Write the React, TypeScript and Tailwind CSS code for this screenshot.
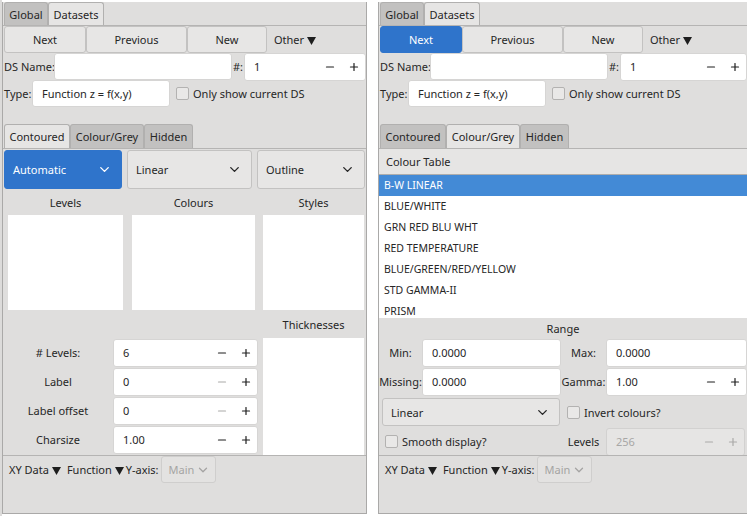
import { ChevronDown, Minus, Plus } from "lucide-react";
import clsx from "clsx";

type SpinProps = { value: string; dimMinus?: boolean; disabled?: boolean; className?: string };

function Spin({ value, dimMinus, disabled, className }: SpinProps) {
  return (
    <div
      className={clsx(
        "flex items-center h-[28px] rounded-[3px] border pl-[9px] pr-[5px]",
        disabled ? "bg-[#e6e5e4] border-[#d2d1d0] text-[#a8a7a6]" : "bg-white border-[#d6d5d4]",
        className
      )}
    >
      <span className="flex-1">{value}</span>
      <Minus size={12} strokeWidth={2.4} className={dimMinus || disabled ? "text-[#aaa9a8]" : "text-[#1e1e1e]"} />
      <Plus size={12} strokeWidth={2.4} className={clsx("ml-[12px]", disabled ? "text-[#aaa9a8]" : "text-[#1e1e1e]")} />
    </div>
  );
}

function Input({ value, className }: { value?: string; className?: string }) {
  return (
    <div className={clsx("h-[27px] flex items-center bg-white rounded-[3px] border border-[#d6d5d4] px-[9px]", className)}>
      {value}
    </div>
  );
}

function Check({ className }: { className?: string }) {
  return <div className={clsx("w-[13px] h-[13px] shrink-0 rounded-[2px] border border-[#b3b2b1] bg-[#e9e8e7]", className)} />;
}

// filled down-pointing triangle used by the menu buttons
function Tri() {
  return (
    <svg width="9" height="8" viewBox="0 0 9 8" className="inline-block ml-[3px] align-[-1px]">
      <polygon points="0,0 9,0 4.5,8" fill="#1e1e1e" />
    </svg>
  );
}

function Tab({ label, active, w }: { label: string; active?: boolean; w: string }) {
  return (
    <div
      className={clsx(
        "h-full flex items-center justify-center border border-b-0 border-[#b1b0af] rounded-t-[3px]",
        active ? "bg-[#e6e5e4]" : "bg-[#c2c1c0]",
        w
      )}
    >
      {label}
    </div>
  );
}

function Button({ label, primary, w }: { label: string; primary?: boolean; w: string }) {
  return (
    <div
      className={clsx(
        "h-full flex items-center justify-center rounded-[3px] border",
        primary ? "bg-[#2f74cb] border-[#2f74cb] text-white" : "bg-[#e7e6e5] border-[#c3c2c1]",
        w
      )}
    >
      {label}
    </div>
  );
}

function Combo({ label, primary, className }: { label: string; primary?: boolean; className?: string }) {
  return (
    <div
      className={clsx(
        "flex items-center rounded-[3px] border pl-[8px] pr-[9px]",
        primary ? "bg-[#2f74cb] border-[#2f74cb] text-white" : "bg-[#e7e6e5] border-[#c3c2c1]",
        className
      )}
    >
      <span className="flex-1">{label}</span>
      <ChevronDown size={15} strokeWidth={2.2} />
    </div>
  );
}

function Contoured() {
  return (
    <div className="flex flex-col flex-1">
      <div className="flex h-[40px] gap-[5px] pl-[1px] pr-[1px] pt-px">
        <Combo label="Automatic" primary className="w-[118px]" />
        <Combo label="Linear" className="w-[125px]" />
        <Combo label="Outline" className="flex-1" />
      </div>
      <div className="flex h-[26px] items-center">
        <div className="ml-[5px] w-[115px] text-center">Levels</div>
        <div className="ml-[9px] w-[123px] text-center">Colours</div>
        <div className="ml-[8px] w-[101px] text-center">Styles</div>
      </div>
      <div className="flex h-[95px]">
        <div className="ml-[5px] w-[115px] bg-white" />
        <div className="ml-[9px] w-[123px] bg-white" />
        <div className="ml-[8px] w-[101px] bg-white" />
      </div>
      <div className="flex h-[28px] items-center">
        <div className="ml-[260px] w-[101px] text-center">Thicknesses</div>
      </div>
      <div className="flex">
        <div className="flex flex-col w-[255px]">
          {[
            ["# Levels:", "6", false],
            ["Label", "0", true],
            ["Label offset", "0", true],
            ["Charsize", "1.00", false],
          ].map(([l, v, dim]) => (
            <div key={l as string} className="flex items-center h-[29px]">
              <div className="w-[110px] text-center">{l}</div>
              <Spin value={v as string} dimMinus={dim as boolean} className="w-[145px]" />
            </div>
          ))}
        </div>
        <div className="ml-[5px] w-[101px] h-[117px] bg-white" />
      </div>
    </div>
  );
}

const tables = [
  "B-W LINEAR",
  "BLUE/WHITE",
  "GRN RED BLU WHT",
  "RED TEMPERATURE",
  "BLUE/GREEN/RED/YELLOW",
  "STD GAMMA-II",
  "PRISM",
];

function ColourGrey() {
  return (
    <div className="flex flex-col flex-1">
      <div className="h-[26px] flex items-center pl-[7px] bg-[#e6e5e4] border-b border-[#aeadac]">Colour Table</div>
      <div className="h-[143px] overflow-hidden bg-white text-[10.5px]">
        {tables.map((t, i) => (
          <div
            key={t}
            className={clsx("h-[21px] flex items-center pl-[5px] shrink-0", i === 0 && "bg-[#438ad6] text-white")}
          >
            {t}
          </div>
        ))}
      </div>
      <div className="h-[20px] flex items-center justify-center">Range</div>
      <div className="flex items-center h-[29px]">
        <div className="w-[43px] text-center">Min:</div>
        <Input value="0.0000" className="w-[139px] h-[28px]" />
        <div className="w-[45px] text-center">Max:</div>
        <Input value="0.0000" className="flex-1 h-[28px]" />
      </div>
      <div className="flex items-center h-[29px]">
        <div className="w-[43px] text-center">Missing:</div>
        <Input value="0.0000" className="w-[139px] h-[28px]" />
        <div className="w-[45px] text-center">Gamma:</div>
        <Spin value="1.00" className="flex-1" />
      </div>
      <div className="flex items-center h-[31px] pt-[1px]">
        <Combo label="Linear" className="ml-[3px] w-[178px] h-[28px]" />
        <Check className="ml-[7px]" />
        <span className="ml-[4px]">Invert colours?</span>
      </div>
      <div className="flex items-center h-[29px]">
        <div className="flex items-center w-[182px]">
          <Check className="ml-[6px]" />
          <span className="ml-[4px]">Smooth display?</span>
        </div>
        <div className="w-[45px] text-center">Levels</div>
        <Spin value="256" disabled className="flex-1 mr-[2px]" />
      </div>
    </div>
  );
}

function Panel({ variant, className }: { variant: "contoured" | "colour"; className?: string }) {
  const colour = variant === "colour";
  return (
    <div className={clsx("flex flex-col h-[512px] mt-[2px] bg-[#dfdedd] border-l border-b border-[#aaa9a8]", className)}>
      <div className="flex h-[23px] pl-[1px]">
        <Tab label="Global" w="w-[44px]" />
        <Tab label="Datasets" active w="w-[56px]" />
      </div>
      <div className="flex flex-col flex-1 border-t border-[#b5b4b3]">
        <div className="flex h-[27px] pl-px">
          <Button label="Next" primary={colour} w="w-[82px]" />
          <Button label="Previous" w="w-[101px]" />
          <Button label="New" w="w-[80px]" />
          <span className="ml-[7px] self-center">
            Other
            <Tri />
          </span>
        </div>
        <div className="flex items-center h-[27px]">
          <span className="w-[51px] pl-px whitespace-nowrap">DS Name:</span>
          <Input className="w-[178px] h-[26px]" />
          <span className="w-[12px] text-center">#:</span>
          <Spin value="1" className="flex-1 h-[26px]" />
        </div>
        <div className="flex items-center h-[27px]">
          <span className="w-[29px] pl-px">Type:</span>
          <Input value="Function z = f(x,y)" className="w-[138px] h-[26px]" />
          <Check className="ml-[6px]" />
          <span className="ml-[4px]">Only show current DS</span>
        </div>
        <div className="h-[17px]" />
        <div className="flex h-[24px] pl-px">
          <Tab label="Contoured" active={!colour} w="w-[66px]" />
          <Tab label="Colour/Grey" active={colour} w="w-[74px]" />
          <Tab label="Hidden" w="w-[49px]" />
        </div>
        <div className="flex flex-col h-[307px] border-t border-[#b5b4b3]">
          {colour ? <ColourGrey /> : <Contoured />}
        </div>
        <div className="flex-1 border-t border-[#b5b4b3]">
          <div className="flex items-center h-[27px] pl-[6px]">
            <span>
              XY Data
              <Tri />
            </span>
            <span className="ml-[6px]">
              Function
              <Tri />
            </span>
            <span className="ml-[2px]">Y-axis:</span>
            <div className="ml-[2px] w-[55px] h-[27px] flex items-center pl-[7px] pr-[5px] rounded-[3px] border border-[#cfcecd] bg-[#e3e2e1] text-[#a5a4a3]">
              <span className="flex-1">Main</span>
              <ChevronDown size={14} strokeWidth={2.2} />
            </div>
          </div>
        </div>
      </div>
    </div>
  );
}

export default function App() {
  return (
    <div className="flex w-[747px] h-[516px] bg-white overflow-hidden text-[11px] text-[#262626] font-['Noto_Sans',sans-serif] leading-none">
      <div className="w-[2px] bg-[#dcdbda]" />
      <Panel variant="contoured" className="w-[365px] border-r" />
      <div className="w-[11px]" />
      <Panel variant="colour" className="w-[369px]" />
    </div>
  );
}
